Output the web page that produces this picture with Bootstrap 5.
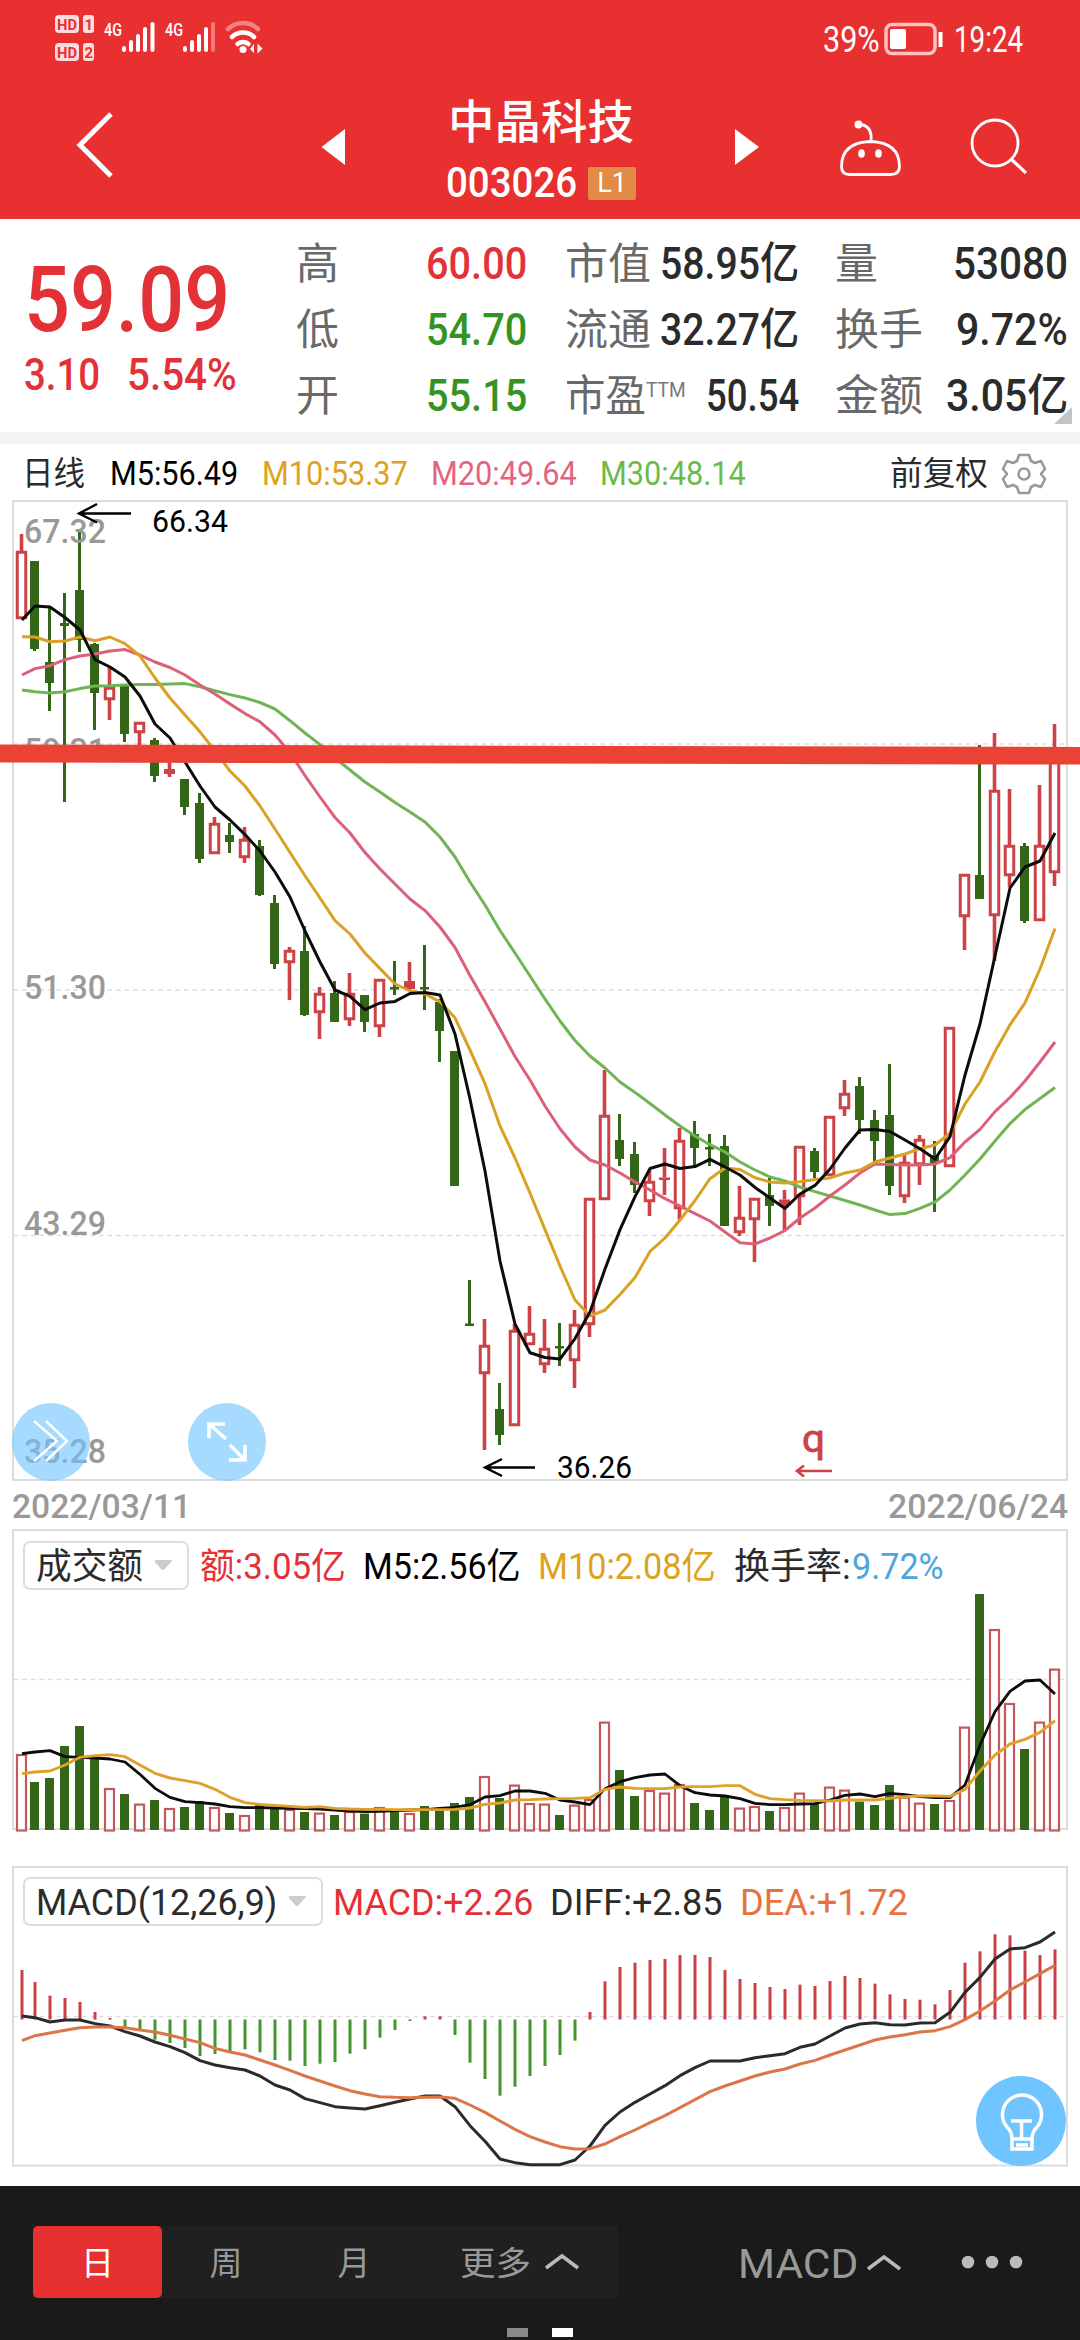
<!DOCTYPE html>
<html lang="zh-CN">
<head>
<meta charset="utf-8">
<meta name="viewport" content="width=device-width, initial-scale=1">
<title>中晶科技 003026</title>
<link href="https://cdn.jsdelivr.net/npm/bootstrap@5.3.0/dist/css/bootstrap.min.css" rel="stylesheet">
<style>
  :root { --up:#e23237; --down:#359322; --ink:#2b2b2b; --muted:#696969; }
  html, body { overflow: hidden; }
  body { width:1080px; height:2340px; background:#fff; font-family:Roboto,"Noto Sans CJK SC",sans-serif; color:var(--ink); line-height:1; }
  svg { display:block; flex:none; overflow:visible; }
  .fit { display:inline-block; flex:none; white-space:nowrap; text-align:left; }
  .fit > span { display:inline-block; transform-origin:0 50%; }
  .topbar { background:#e83030; height:219px; color:#fff; }
  .statusbar { height:74px; padding:0 57px 0 55px; }
  .titlebar { height:145px; }
  .stock-name { font-size:46px; line-height:46px; font-weight:500; }
  .stock-code { font-size:42px; line-height:34px; font-weight:500; }
  .level-tag { background:#e28b45; width:48px; height:33px; font-size:27px; line-height:33px; border-radius:2px; }
  .quote { height:213px; padding-top:12px; }
  .quote-main { width:296px; padding-left:24px; color:var(--up); }
  .quote-price { font-size:91px; line-height:91px; font-weight:500; margin-top:24px; }
  .quote-change { font-size:44px; line-height:44px; margin-top:7px; gap:27px; font-weight:500; }
  .stat-col { height:198px; }
  .stat-line { height:66px; font-size:44px; line-height:66px; font-weight:500; }
  .stat-line .lbl { color:var(--muted); font-size:43px; font-weight:400; }
  .ttm { font-size:21px; line-height:20px; color:#777; font-weight:400; margin-bottom:12px; }
  .up { color:var(--up); } .down { color:var(--down); }
  .fold { right:8px; bottom:8px; }
  .gap-band { height:12px; background:#f5f5f5; }
  .ma-row { height:56px; padding:3px 35px 0 22px; font-size:33px; }
  .c-gold { color:#dea21b; } .c-pink { color:#e2647e; } .c-green { color:#6cbb48; } .c-sky { color:#4aa6dc; } .c-orange { color:#e6733f; }
  .date-row { height:47px; padding:0 12px 0 12px; color:#999; font-size:34px; font-weight:500; }
  .kchart { height:982px; }
  .round-btn { width:78px; height:78px; border-radius:50%; background:rgba(112,196,255,.62); top:903px; border:0; padding:0; }
  .rb-a { left:12px; } .rb-b { left:188px; }
  .panel-vol { height:302px; }
  .panel-macd { height:302px; margin-top:34px; }
  .panel-head { padding:12px 0 0 23px; font-size:36px; line-height:38px; color:var(--ink); }
  .panel-head .fit { position:relative; top:1.5px; }
  .picker { height:49px; border:2px solid #ddd; border-radius:7px; padding:0 15px 0 11px; background:#fff; }
  .bulb { right:14px; bottom:1px; width:90px; height:90px; border-radius:50%; background:#70c4ff; }
  .bottombar { margin-top:19px; height:154px; background:#1a1a1a; padding-top:40px; color:#999; font-size:33px; line-height:36px; }
  .seg { margin-left:33px; width:585px; height:72px; background:#202020; }
  .seg > div { height:72px; padding-top:3px; }
  .seg-on { width:129px; background:#e73030; color:#fff; border-radius:5px; }
  .home-dots { gap:24px; margin-top:30px; }
  .home-dots i { width:21px; height:9px; background:#8a8a8a; }
  .home-dots i + i { background:#fff; }
</style>
<script src="https://cdn.jsdelivr.net/npm/bootstrap@5.3.0/dist/js/bootstrap.bundle.min.js"></script>
</head>
<body>
<header class="topbar">
  <div class="statusbar d-flex align-items-center">
    <svg width="215" height="50" viewBox="55 12 215 50" fill="#fff">
      <g fill="#fdd"><rect x="55" y="15" width="24" height="18" rx="4"/><rect x="83" y="15" width="11" height="18" rx="3"/><rect x="55" y="43" width="24" height="18" rx="4"/><rect x="83" y="43" width="11" height="18" rx="3"/></g>
      <g fill="#e83030" font-size="15" font-weight="700"><text x="57" y="29.500" textLength="20" lengthAdjust="spacingAndGlyphs">HD</text><text x="84.500" y="29.500">1</text><text x="57" y="57.500" textLength="20" lengthAdjust="spacingAndGlyphs">HD</text><text x="84.500" y="57.500">2</text></g>
      <g font-size="19" font-weight="500"><text x="104" y="36" textLength="18" lengthAdjust="spacingAndGlyphs">4G</text><text x="165" y="36" textLength="18" lengthAdjust="spacingAndGlyphs">4G</text></g>
      <g stroke="#fff" stroke-width="4" stroke-linecap="round">
        <path d="M124 48v2M131 42v8M138 36v14M145 29v21M152.500 24v26M185 48v2M192 42v8M199 36v14M206 29v21"/><path d="M213 24v26" opacity=".35"/></g>
      <g fill="none" stroke="#fff" stroke-width="4.500" stroke-linecap="round"><path d="M228 29a22 22 0 0 1 30 0" opacity=".4"/><path d="M232 37a16 16 0 0 1 22 0"/><path d="M237.500 44a9 9 0 0 1 11 0"/></g>
      <circle cx="243" cy="49.500" r="3.500"/><path d="M250 49l4-5v9zM262.500 48.500l-5-5v10z"/>
    </svg>
    <div class="ms-auto d-flex align-items-center" style="padding-top:4px">
      <div class="fit" data-w="57" style="font-size:37px">39%</div>
      <svg style="margin-left:3px" width="62" height="36" viewBox="884 19 62 36"><rect x="887" y="22.500" width="49" height="29" rx="6" fill="none" stroke="#ffc0c0" stroke-width="3.500"/><rect x="891" y="27" width="16" height="20" rx="2" fill="#fff"/><path d="M941.500 30v15" stroke="#fff" stroke-width="4"/></svg>
      <div class="fit" data-w="69" style="font-size:37px; margin-left:9px">19:24</div>
    </div>
  </div>
  <div class="titlebar d-flex">
    <svg width="446" height="145" viewBox="0 74 446 145"><path d="M111 114L80 145l31 31" fill="none" stroke="#fff" stroke-width="5"/><path d="M345 129v36l-23.500-18z" fill="#fff"/></svg>
    <div class="d-flex flex-column align-items-center" style="width:190px;padding-top:25px">
      <div class="stock-name fit" data-w="186">中晶科技</div>
      <div class="d-flex align-items-center justify-content-between w-100" style="margin-top:21px">
        <div class="stock-code fit" data-w="131">003026</div><div class="level-tag text-center">L1</div>
      </div>
    </div>
    <svg width="444" height="145" viewBox="636 74 444 145" fill="none" stroke="#fff"><path d="M735 129v36l24-18z" fill="#fff" stroke="none"/>
      <g stroke-width="2.800"><path d="M870.500 141.500q29 1 29 25 0 8-9 8h-41q-8 0-8-8 0-24 29-25z"/><path d="M871 141c1-10-3-16-12-17"/></g>
      <circle cx="858.500" cy="124.500" r="4" fill="#fff" stroke="none"/><ellipse cx="861.500" cy="153.500" rx="3.300" ry="4.300" fill="#fff" stroke="none"/><ellipse cx="878.500" cy="153.500" rx="3.300" ry="4.300" fill="#fff" stroke="none"/>
      <circle cx="995" cy="143" r="23" stroke-width="2.800"/><path d="M1011 159l15 14" stroke-width="3.200"/></svg>
  </div>
</header>

<section class="quote d-flex position-relative">
  <div class="quote-main">
    <div class="quote-price"><span class="fit" data-w="206">59.09</span></div>
    <div class="quote-change d-flex"><span class="fit" data-w="76">3.10</span><span class="fit" data-w="110">5.54%</span></div>
  </div>
  <div class="stat-col" style="width:231px">
    <div class="stat-line d-flex justify-content-between"><span class="lbl">高</span><span class="fit up" data-w="101">60.00</span></div>
    <div class="stat-line d-flex justify-content-between"><span class="lbl">低</span><span class="fit down" data-w="101">54.70</span></div>
    <div class="stat-line d-flex justify-content-between"><span class="lbl">开</span><span class="fit down" data-w="101">55.15</span></div>
  </div>
  <div class="stat-col" style="width:234px;margin-left:38px">
    <div class="stat-line d-flex justify-content-between"><span class="lbl">市值</span><span class="fit" data-w="139">58.95亿</span></div>
    <div class="stat-line d-flex justify-content-between"><span class="lbl">流通</span><span class="fit" data-w="139">32.27亿</span></div>
    <div class="stat-line d-flex justify-content-between align-items-center"><span class="d-flex align-items-center"><span class="lbl fit" data-w="81">市盈</span><span class="ttm fit" data-w="40">TTM</span></span><span class="fit" data-w="93">50.54</span></div>
  </div>
  <div class="stat-col" style="width:233px;margin-left:36px">
    <div class="stat-line d-flex justify-content-between"><span class="lbl">量</span><span class="fit" data-w="115">53080</span></div>
    <div class="stat-line d-flex justify-content-between"><span class="lbl fit" data-w="88">换手</span><span class="fit" data-w="112">9.72%</span></div>
    <div class="stat-line d-flex justify-content-between"><span class="lbl fit" data-w="88">金额</span><span class="fit" data-w="122">3.05亿</span></div>
  </div>
  <svg class="fold position-absolute" width="18" height="17"><path d="M18 0v17H0z" fill="#c4c4c4"/></svg>
</section>
<div class="gap-band"></div>

<section class="ma-row d-flex align-items-center">
  <span class="fit" data-w="63">日线</span>
  <span class="fit text-black" data-w="128" style="margin-left:25px">M5:56.49</span>
  <span class="fit c-gold" data-w="146" style="margin-left:24px">M10:53.37</span>
  <span class="fit c-pink" data-w="146" style="margin-left:23px">M20:49.64</span>
  <span class="fit c-green" data-w="146" style="margin-left:23px">M30:48.14</span>
  <span class="fit ms-auto" data-w="98">前复权</span>
  <svg style="margin-left:15px" width="42" height="42" viewBox="-21 -21 42 42" fill="none" stroke="#999" stroke-width="2.600" stroke-linejoin="round"><path d="M-5-19h10l2 6 4 2 6-2 4 8-4 5 4 5-4 8-6-2-4 2-2 6h-10l-2-6-4-2-6 2-4-8 4-5-4-5 4-8 6 2 4-2z"/><circle r="5.500"/></svg>
</section>

<section class="kchart position-relative">
  <svg id="kline" width="1080" height="982" viewBox="0 500 1080 982"></svg>
  <button class="round-btn rb-a position-absolute" aria-label="展开"><svg width="78" height="78" viewBox="0 0 78 78" fill="none" stroke="#fff" stroke-width="2.500"><path d="M22 18l23 20-23 20M34 18l21 20-21 20"/></svg></button>
  <button class="round-btn rb-b position-absolute" aria-label="全屏"><svg width="78" height="78" viewBox="0 0 78 78" fill="none" stroke="#fff" stroke-width="3.600"><path d="M21 35V21h16M21 21l17 15M42 42l15 15M57 42v15H41"/></svg></button>
</section>
<div class="date-row d-flex justify-content-between align-items-center"><span class="fit" data-w="179">2022/03/11</span><span class="fit" data-w="180">2022/06/24</span></div>

<section class="panel-vol position-relative">
  <svg id="vol" class="position-absolute top-0 start-0" width="1080" height="304" viewBox="0 1529 1080 304"></svg>
  <div class="panel-head position-relative d-flex align-items-center">
    <div class="picker d-flex align-items-center"><span class="fit" data-w="107">成交额</span><svg style="margin-left:11px" width="18" height="11"><path d="M1 0h16q2 0 0 2l-7 8h-2L1 2z" fill="#ccc"/></svg></div>
    <span class="fit up" data-w="146" style="margin-left:11px">额:3.05亿</span>
    <span class="fit text-black" data-w="158" style="margin-left:17px">M5:2.56亿</span>
    <span class="fit c-gold" data-w="178" style="margin-left:17px">M10:2.08亿</span>
    <span class="fit" data-w="117" style="margin-left:18px">换手率:</span><span class="fit c-sky" data-w="92" style="margin-left:1px">9.72%</span>
  </div>
</section>

<section class="panel-macd position-relative">
  <svg id="macd" class="position-absolute top-0 start-0" width="1080" height="302" viewBox="0 1865 1080 302"></svg>
  <div class="panel-head position-relative d-flex align-items-center">
    <div class="picker d-flex align-items-center"><span class="fit" data-w="241">MACD(12,26,9)</span><svg style="margin-left:11px" width="18" height="11"><path d="M1 0h16q2 0 0 2l-7 8h-2L1 2z" fill="#ccc"/></svg></div>
    <span class="fit up" data-w="200" style="margin-left:10px">MACD:+2.26</span>
    <span class="fit" data-w="173" style="margin-left:17px">DIFF:+2.85</span>
    <span class="fit c-orange" data-w="168" style="margin-left:17px">DEA:+1.72</span>
  </div>
  <div class="bulb position-absolute"><svg width="90" height="90" viewBox="0 0 90 90" fill="none" stroke="#fff" stroke-width="3.500"><path d="M36 63q0-7-5-12a19.500 19.500 0 1 1 30 0q-5 5-5 12v10H36zM36 63h20M35 45h21M45.500 45v18M40 69h12"/></svg></div>
</section>

<footer class="bottombar">
  <div class="d-flex align-items-center">
    <div class="seg d-flex align-items-center">
      <div class="seg-on d-flex align-items-center justify-content-center">日</div>
      <div class="d-flex align-items-center justify-content-center" style="width:128px">周</div>
      <div class="d-flex align-items-center justify-content-center" style="width:128px">月</div>
      <div class="d-flex align-items-center" style="padding-left:42px"><span class="fit" data-w="71">更多</span><svg style="margin-left:13px" width="36" height="17" fill="none" stroke="#bbb" stroke-width="3.500"><path d="M2 13L18 1l16 12"/></svg></div>
    </div>
    <span class="fit" data-w="120" style="margin-left:120px;font-size:41px;padding-top:4px">MACD</span>
    <svg style="margin-left:8px" width="36" height="17" fill="none" stroke="#bbb" stroke-width="3.500"><path d="M2 15L18 3l16 12"/></svg>
    <svg style="margin-left:59px" width="62" height="14" fill="#bbb"><circle cx="7" cy="7" r="6.300"/><circle cx="31" cy="7" r="6.300"/><circle cx="55" cy="7" r="6.300"/></svg>
  </div>
  <div class="home-dots d-flex justify-content-center"><i></i><i></i></div>
</footer>

<script>
// Squeeze text to the condensed width given in data-w
document.querySelectorAll('.fit').forEach(el => {
  const s = document.createElement('span');
  s.append(...el.childNodes);
  el.append(s);
  const w = +el.dataset.w;
  const k = w / s.offsetWidth;
  el.style.width = w + 'px';
  s.style.transform = `scaleX(${k})`;
});

const X = i => i === 0 ? 21.5 : 34.5 + 15 * (i - 1);
const RED = '#cc4245', GREEN = '#336617';
const line = (d, c, w = 3, f = v => v) => `<polyline fill="none" stroke="${c}" stroke-width="${w}" stroke-linejoin="round" points="${d.map((v, i) => (X(i) + 0.5) + ',' + f(v)).join(' ')}"/>`;
const dash = y => `<path d="M14 ${y}H1066" stroke="#ddd" stroke-width="1.600" stroke-dasharray="4.500 4"/>`;
const frame = (y, b) => `<rect x="13" y="${y}" width="1054" height="${b - y}" fill="none" stroke="#dcdcdc" stroke-width="2"/>`;
const label = (x, y, t, w, c, s = 33, wt = 500) => `<text x="${x}" y="${y}" font-size="${s}" font-weight="${wt}" fill="${c}" textLength="${w}" lengthAdjust="spacingAndGlyphs">${t}</text>`;

// colour, high, body top, body bottom, low
const K = `R 534 551 619 619|G 561 561 649 651|G 608 662 683 711|G 593 623 626 802|G 529 590 640 652|G 643 644 693 730|R 667 687 700 720|G 686 686 734 742|R 722 722 733 745|G 738 740 776 782|R 758 769 774 777|G 779 779 807 815|G 793 803 859 863|R 817 823 854 854|G 823 835 842 853|R 827 839 858 863|G 840 846 895 896|G 895 903 964 969|R 947 950 963 1000|G 926 951 1015 1016|R 987 993 1013 1039|G 981 993 1022 1022|R 973 993 1020 1026|G 995 995 1022 1032|R 979 979 1027 1037|G 961 987 989.5 995|R 962 981 989 991|G 945 987 989.5 1010|G 999 1002 1031 1062|G 1051 1051 1186 1186|G 1280 1323.5 1326 1326|R 1319 1345 1374 1450|G 1383 1409 1435 1445|R 1324 1330 1426 1426|R 1306 1333 1345 1345|R 1319 1348 1365 1373|G 1323 1346 1348.5 1366|R 1310 1324 1361 1388|R 1198 1198 1325 1337|R 1070 1115 1200 1200|G 1114 1140 1159 1166|G 1142 1154 1185 1193|R 1170 1181 1202 1216|R 1148 1177.5 1180 1195|R 1128 1140 1209 1220|G 1121 1134 1148 1166|G 1134 1147 1149.5 1166|G 1135 1146 1226 1226|R 1186 1217 1233 1236|R 1198 1198 1220 1262|G 1178 1195 1206 1226|R 1190 1199.5 1205 1230|R 1146 1146 1197 1225|G 1148 1151 1172 1178|R 1116 1116 1176 1176|R 1080 1093 1109 1116|G 1077 1086 1120 1134|G 1110 1120 1141 1164|G 1064 1115 1186 1195|R 1153 1162 1197 1203|R 1135 1139 1165 1185|G 1141 1155 1163 1212|R 1027 1027 1167 1167|R 874 874 917 950|G 745 875 899 899|R 733 790 916 961|R 789 845 876 887|G 843 846 921 923|R 785 845 921 921|R 724 755 873 886`
  .split('|').map(r => r.split(' ')).map(([c, ...v]) => [c, ...v.map(Number)]);
const M5 = [620,606,607,617.5,630,659.6,667,677,696,724,738,762,786,807,820,834.6,851,872,897,931,962,990,996.4,1009.6,1003,1001.4,993.5,992.5,995,1034,1099,1171,1261,1324,1352.7,1357.5,1359,1338.6,1312,1269,1229.6,1196.6,1168.5,1164,1168.5,1166.6,1159.3,1167,1175,1187.4,1198,1208.4,1194,1185.4,1169,1148,1130,1129.4,1131.5,1140,1148.7,1159,1136.7,1075,1024,956,888,867,861,833];
const M10 = [636.8,637,641.8,641,637,640.7,637,643.6,656,678,698,715,731.8,751,771,786,806,829,852.5,875.7,898,920.7,934,953,968.6,984,991,994,1001.8,1017.8,1050,1083.7,1126,1158,1193,1229.6,1266,1300,1316,1310,1294.5,1277.6,1251.4,1238,1220,1200.5,1178.7,1168,1169.5,1177.7,1182,1183,1181.7,1179.6,1178,1173,1170,1162,1158,1154,1148.7,1145,1133,1104,1082,1051.5,1024.8,1002.8,969,928.5];
const M20 = [675,668.6,665.7,659.6,656,654,651,649.6,655,662,667.5,675,685,694,704,713.6,721.8,735,752.5,775.7,797,817.5,833,852.5,869,884,899,910.6,927,947.5,975.6,1001.8,1029,1056.5,1080,1106,1128.8,1147,1160,1165,1173,1182,1190,1198.6,1206,1213.6,1221,1232,1242.7,1244,1238,1230.5,1218,1208,1196,1185,1173,1164,1164.4,1165,1165,1164,1157.6,1142,1129.4,1111.6,1097.5,1081,1062,1042];
const M30 = [690,691.8,693,691.8,688.6,686,685.7,685,684.6,684.6,684,683.6,686.8,690.7,694.6,698,702.5,709,720.7,733,744.6,758,770,782,792,802.5,812,822,837,857,882,905,930.5,953,976,999,1021,1040.5,1056,1068,1082,1092.4,1103.5,1115,1126,1136,1144.7,1152,1162,1170,1177,1181,1187,1191.6,1196,1200.5,1205,1210,1214.6,1213.6,1208.4,1202,1190,1175,1159,1141,1123.6,1109.5,1098.5,1087.5];

let h = frame(501, 1480) + dash(744) + dash(990) + dash(1235.5);
K.forEach(([c, hi, t, b, lo], i) => {
  const x = X(i);
  if (c === 'G') {
    h += `<path d="M${x} ${hi}V${lo}" stroke="${GREEN}" stroke-width="3"/><rect x="${x - 4.5}" y="${t}" width="9" height="${b - t}" fill="${GREEN}"/>`;
  } else {
    h += `<path d="M${x} ${hi}V${t}M${x} ${b}V${lo}" stroke="${RED}" stroke-width="3.600"/>`;
    h += b - t < 9 ? `<rect x="${x - 5.5}" y="${t}" width="11" height="${b - t}" fill="${RED}"/>`
      : `<rect x="${x - 4.25}" y="${t + 1.25}" width="8.500" height="${b - t - 2.5}" fill="#fff" stroke="${RED}" stroke-width="3"/>`;
  }
});
h += line(M30, '#70b553') + line(M20, '#dd6079') + line(M10, '#d9a224') + line(M5, '#0c0c0c');
h += [['67.32', 542.5], ['59.31', 762], ['51.30', 998.5], ['43.29', 1235], ['35.28', 1462.5]].map(([t, y]) => label(24, y, t, 82, '#999')).join('');
h += `<g fill="none" stroke="#000" stroke-width="2.400"><path d="M131 513.500H80M97 504l-18 9.500 18 9"/><path d="M535 1467.500H486M502 1459l-17 8.500 17 8.500"/></g>`;
h += label(152, 532, '66.34', 76, '#000', 31, 400) + label(557, 1478, '36.26', 75, '#000', 31, 400);
h += `<text x="802" y="1452" font-size="38" font-weight="400" stroke="${RED}" stroke-width=".8" fill="${RED}" textLength="23" lengthAdjust="spacingAndGlyphs">q</text><path d="M832 1471H798M804 1465.500l-7 5.500 7 5.500" fill="none" stroke="${RED}" stroke-width="2.600"/>`;
h += `<path d="M0 744.500L1080 747v17.500L0 762.500z" fill="#ea4335"/>`;
document.getElementById('kline').innerHTML = h;

const VT = [1754,1782,1778,1746,1726,1758,1788,1794,1803.6,1800,1808,1807,1801,1807,1813,1815,1805,1808,1809,1812,1812.6,1815,1811,1813.6,1807,1812,1813,1806,1810,1803,1797,1776,1798,1784.6,1803,1803.6,1815,1804.6,1799,1721.6,1770,1796,1790,1792.6,1784,1803,1810,1795,1807.6,1806,1811,1807,1792.6,1803,1786.6,1789.6,1801.6,1805,1785,1796.6,1802.6,1804,1800,1726.6,1594,1629,1703,1749,1721.6,1668.6];
const V5 = [731,726,722,740,742,744,747,756,793,835,862,875,878,882,890,893,893,894,895,896,897,900,903,905,904,902,900,899,895,892,884,861,857,843,843,850,870,876,884,836,815,803,795,792,827,848,855,858,866,880,884,884,882,881,870,856,852,860,850,854,860,863,863,825,705,605,544,513,510,552];
const V10 = [791,786,783,765,742,737,734,740,765,790,804,812,820,838,862,878,883,886,889,892,890,895,897,898,898,899,899,899,899,898,894,883,879,870,869,867,866,865,863,838,831,835,836,836,831,830,830,827,827,853,866,869,871,872,873,870,870,870,865,860,858,858,859,838,783,735,702,688,667,632];
const fv = v => 1510 + v / 3;
h = frame(1530, 1829) + dash(1679.5);
VT.forEach((t, i) => {
  const x = X(i);
  h += K[i][0] === 'G' ? `<rect x="${x - 4.5}" y="${t}" width="9" height="${1830 - t}" fill="${GREEN}"/>`
    : `<rect x="${x - 4.5}" y="${t + 1}" width="9" height="${1829.5 - t}" fill="#fff" stroke="#c2595d" stroke-width="2.200"/>`;
});
h += line(V5, '#0c0c0c', 2.8, fv) + line(V10, '#dfa12b', 2.9, fv);
document.getElementById('vol').innerHTML = h;

const MB = [360,396,437,444,456,486,504,532,537,569,579,594,618,612,606,598,607,630,632,648,641,636,611,598,563,540,513,499,499,555,638,687,737,710,678,648,615,572,486,394,351,338,330,327,315,315,321,360,387,399,411,417,404,408,393,378,384,401,433,447,449,463,420,338,304,253,256,302,315,298];
const DIFF = [498,503,516,510,510,521,528,545,558,576,590,608,632,645,653,660,678,705,720,746,758,770,774,777,767,757,747,738,738,770,827,874,927,938,944,944,944,930,888,826,786,757,732,707,677,653,633,633,633,623,617,611,592,582,558,534,522,518,524,525,519,518,487,427,382,327,297,293,276,246];
const DEA = [572,557,549,541,533,531,531,533,540,546,556,567,578,595,606,615,630,645,661,678,693,708,722,732,740,742,743,742,741,745,765,787,813,838,860,876,890,897,896,882,860,840,818,797,773,749,725,708,693,678,666,657,642,631,615,600,585,570,561,554,546,542,530,509,483,453,420,396,371,346];
const fm = v => 1850 + v / 3;
h = frame(1867, 2165.5) + dash(2016.5);
MB.forEach((v, i) => { h += `<path d="M${X(i) + 0.5} 2019.500V${fm(v)}" stroke="${v < 508 ? '#c93f46' : '#43952f'}" stroke-width="3"/>`; });
h += line(DIFF, '#2b2b2b', 3, fm) + line(DEA, '#dc7648', 3, fm);
document.getElementById('macd').innerHTML = h;
</script>
</body>
</html>
